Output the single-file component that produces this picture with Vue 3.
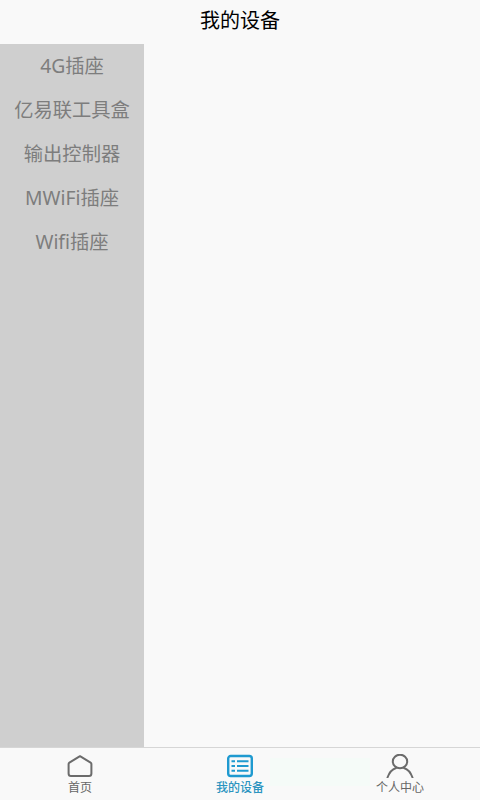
<template>
  <div class="page">
    <header class="title">我的设备</header>
    <div class="body">
      <ul class="side">
        <li v-for="item in categories" :key="item" class="side-item">{{ item }}</li>
      </ul>
      <div class="content"></div>
    </div>
    <nav class="tabbar">
      <div class="tab">
        <svg class="icon" width="26" height="24" viewBox="0 0 26 24" fill="none" stroke="#6b6b6b" stroke-width="2" stroke-linejoin="round">
          <path d="M13 2.2 L23.6 8.6 Q24.4 9.1 24.4 10 V19.5 Q24.4 22 22 22 H4 Q1.6 22 1.6 19.5 V10 Q1.6 9.1 2.4 8.6 Z" />
        </svg>
        <span>首页</span>
      </div>
      <div class="tab active">
        <svg class="icon" width="26" height="24" viewBox="0 0 26 24" fill="none" stroke="#1f9ad0">
          <rect x="1.2" y="2" width="23.6" height="20" rx="2.5" stroke-width="2.4" />
          <path d="M4.5 7.2 H8 M10 7.2 H21.5 M4.5 12 H8 M10 12 H21.5 M4.5 16.8 H8 M10 16.8 H21.5" stroke-width="2" />
        </svg>
        <span>我的设备</span>
      </div>
      <div class="tab">
        <svg class="icon" width="28" height="24" viewBox="0 0 28 24" fill="none" stroke="#6b6b6b" stroke-width="2" stroke-linecap="round">
          <ellipse cx="14" cy="7.5" rx="7.2" ry="6.8" />
          <path d="M1.5 23.5 C3.5 18 7 15 10 14 M26.5 23.5 C24.5 18 21 15 18 14" />
        </svg>
        <span>个人中心</span>
      </div>
    </nav>
  </div>
</template>

<script setup>
const categories = ['4G插座', '亿易联工具盒', '输出控制器', 'MWiFi插座', 'Wifi插座']
</script>

<style>
body {
  margin: 0;
  background: #f9f9f9;
}
</style>

<style scoped>
.page {
  width: 480px;
  height: 800px;
  display: flex;
  flex-direction: column;
  background: #f9f9f9;
  font-family: "Noto Sans", "Noto Sans CJK SC", sans-serif;
  font-variant-ligatures: none;
}

.title {
  height: 44px;
  line-height: 41px;
  text-align: center;
  font-size: 20px;
  color: #000;
}

.body {
  flex: 1;
  display: flex;
  min-height: 0;
}

.side {
  width: 144px;
  margin: 0;
  padding: 0;
  list-style: none;
  background: #cfcfcf;
}

.side-item {
  height: 44px;
  line-height: 43px;
  text-align: center;
  font-size: 19.3px;
  color: #7d7d7d;
}

.content {
  flex: 1;
}

.tabbar {
  position: relative;
  height: 52px;
  display: flex;
  border-top: 1px solid #d6d6d6;
  background: #f9f9f9;
}

/* 底栏上那块很淡的绿色 */
.tabbar::after {
  content: "";
  position: absolute;
  left: 270px;
  top: 10px;
  width: 100px;
  height: 28px;
  background: #f5fbf8;
}

.tab {
  position: relative;
  z-index: 1;
  flex: 1;
  display: flex;
  flex-direction: column;
  align-items: center;
  gap: 2px;
  padding-top: 6px;
  font-size: 12px;
  line-height: 16px;
  color: #666;
}

.icon {
  display: block;
}

.active {
  color: #2b94c0;
  font-weight: 500;
}
</style>
